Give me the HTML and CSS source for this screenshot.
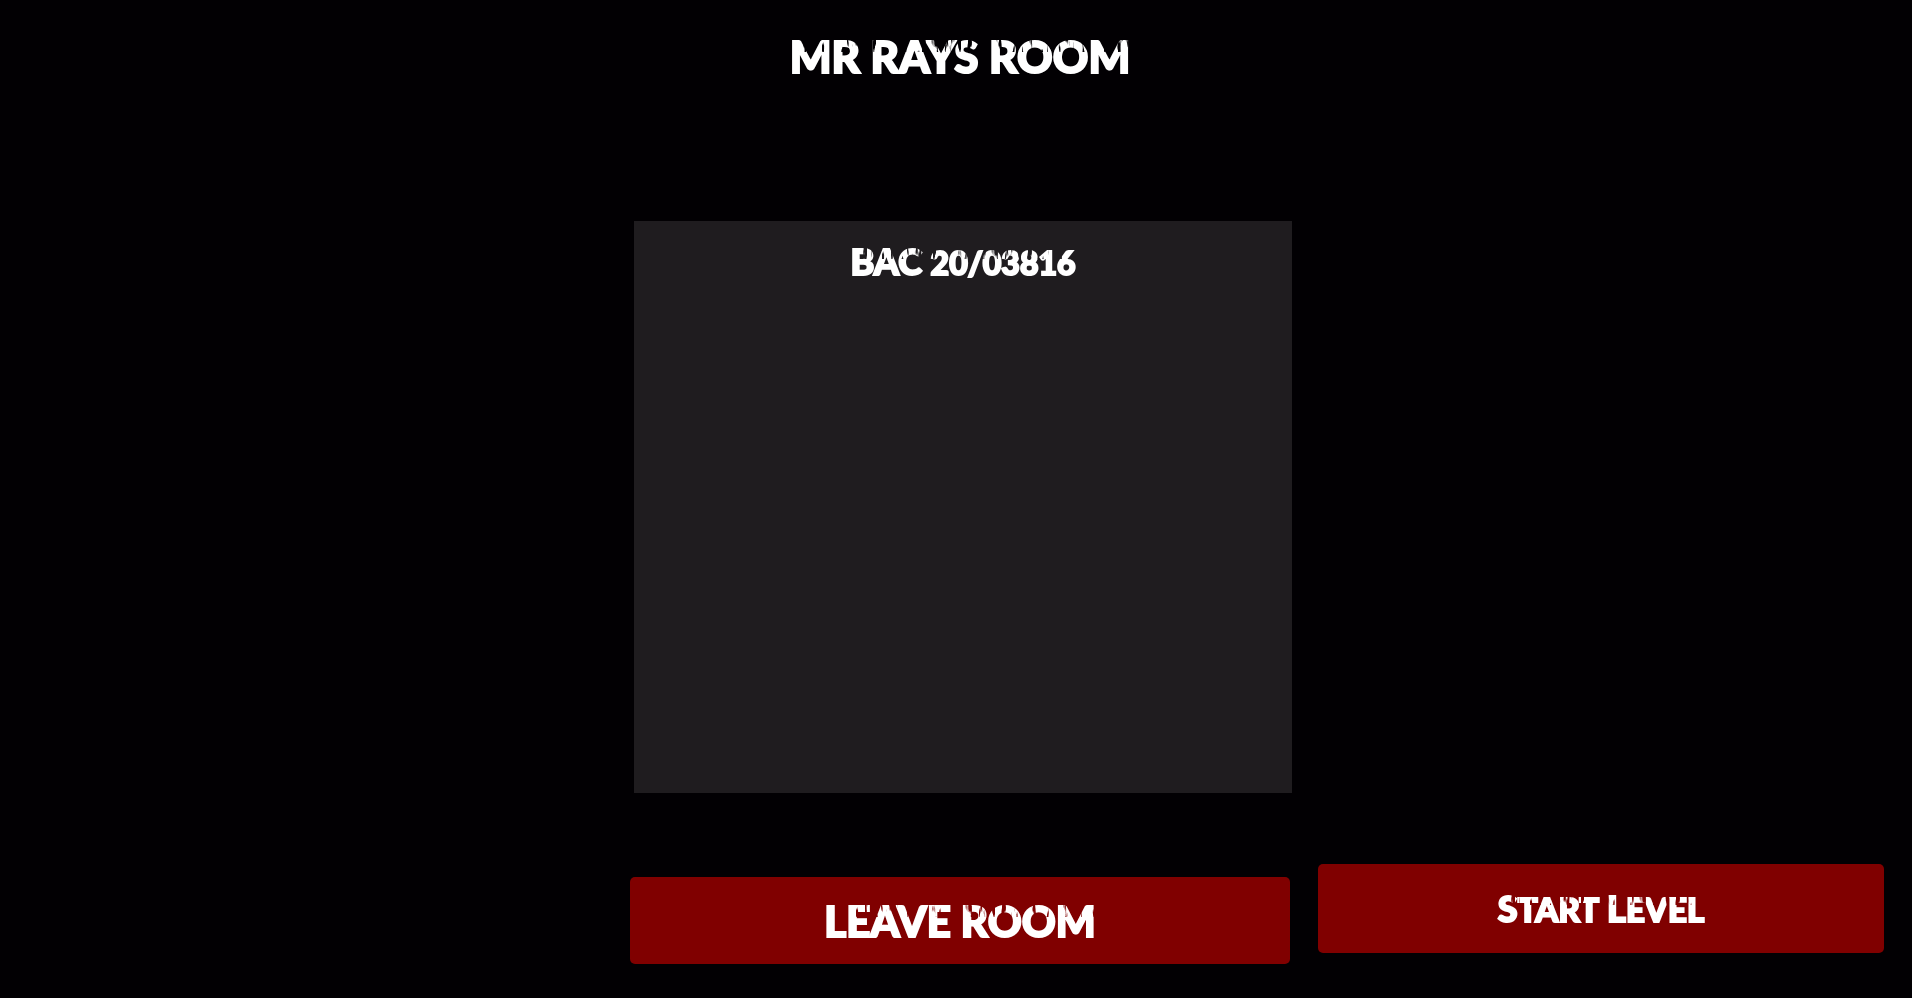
FILE: index.html
```html
<!DOCTYPE html>
<html lang="en">
<head>
    <meta charset="UTF-8">
    <meta name="viewport" content="width=device-width, initial-scale=1.0">
    <link rel="stylesheet" href="styles.css">
    <title>Room</title>
</head>
<body>
    <!-- scratches cut out of the top part of the letters -->
    <svg class="filters" aria-hidden="true">
        <filter id="worn" x="0" y="0" width="1" height="1" primitiveUnits="objectBoundingBox">
            <feTurbulence type="fractalNoise" baseFrequency="0.22 0.05" numOctaves="2" seed="4" x="0" y="0" width="1" height="0.42" result="noise"/>
            <feColorMatrix in="noise" type="matrix" values="0 0 0 0 0  0 0 0 0 0  0 0 0 0 0  9 0 0 0 -5.3" x="0" y="0" width="1" height="0.42" result="scratches"/>
            <feComposite in="SourceGraphic" in2="scratches" operator="out" x="0" y="0" width="1" height="1"/>
        </filter>
    </svg>
    <main class="room">
        <h1 class="room-title"><span class="worn">MR RAYS ROOM</span></h1>
        <ul class="player-list">
            <li class="player"><span class="worn">BAC <span class="digits">20/03816</span></span></li>
        </ul>
        <button type="button" class="btn leave-btn"><span class="worn">LEAVE ROOM</span></button>
        <button type="button" class="btn start-btn"><span class="worn"><span class="word">Start</span> <span class="word">Level</span></span></button>
    </main>
</body>
</html>
```
FILE: styles.css
```css
* {
    margin: 0;
    padding: 0;
    box-sizing: border-box;
}

body {
    background-color: #020003;
    color: #fff;
    font-family: Lato, "Open Sans", sans-serif;
    font-weight: 900;
}

.filters {
    position: absolute;
    width: 0;
    height: 0;
}

.worn {
    display: inline-block;
    white-space: nowrap;
    -webkit-text-stroke: 2px #fff;
    filter: url(#worn);
}

.room {
    min-height: 100vh;
    padding: 30px 28px 34px;
    display: grid;
    grid-template-columns: 287fr 330fr 283fr;
    grid-template-rows: 191px 1fr 171px;
    column-gap: 28px;
}

.room-title {
    grid-column: 2;
    grid-row: 1;
    justify-self: center;
    font-size: 44px;
    line-height: 52px;
    font-weight: 900;
}

.player-list {
    grid-column: 2;
    grid-row: 2;
    margin: 0 -2px 0 4px;
    padding-top: 18px;
    background-color: #1f1c1f;
    list-style: none;
}

.player {
    text-align: center;
    font-size: 36px;
    line-height: 44px;
}

.digits {
    font-size: 32px;
}

.btn {
    grid-row: 3;
    border: none;
    border-radius: 5px;
    background-color: #800000;
    color: #fff;
    font-family: inherit;
    font-weight: 900;
    cursor: pointer;
}

.leave-btn {
    grid-column: 2;
    align-self: end;
    height: 87px;
    font-size: 42px;
    line-height: 52px;
}

.start-btn {
    grid-column: 3;
    height: 89px;
    margin-top: 71px;
    font-size: 33px;
    line-height: 44px;
    text-transform: uppercase;
}

.word {
    display: inline-block;
}

.word::first-letter {
    font-size: 36px;
}

.btn:hover {
    background-color: #990000;
}
```
